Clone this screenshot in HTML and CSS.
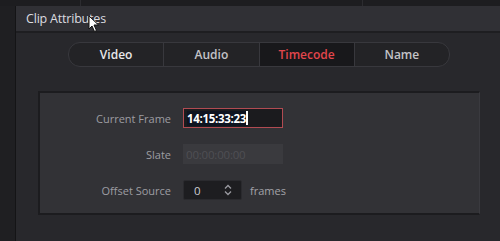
FILE: index.html
```html
<!DOCTYPE html>
<html>
<head>
<meta charset="utf-8">
<link rel="stylesheet" href="styles.css">
</head>
<body>
<div class="app">
  <div class="topstrip"><span class="tick t1"></span><span class="tick t2"></span></div>
  <div class="main">
    <div class="leftstrip"></div>
    <div class="window">
      <div class="header"><span class="title">Clip Attributes</span>
        <svg class="cursor" width="12" height="18" viewBox="0 0 12 18"><path d="M1 1 L1 14 L4 11 L6.5 16.5 L8.5 15.5 L6 10 L10.5 10 Z" fill="#fff" stroke="#111" stroke-width="1"/></svg>
      </div>
      <div class="body">
        <div class="tabs">
          <div class="tab">Video</div>
          <div class="tab">Audio</div>
          <div class="tab active">Timecode</div>
          <div class="tab">Name</div>
        </div>
        <div class="panel">
          <div class="row">
            <div class="label">Current Frame</div>
            <div class="field focus"><span class="sel">14:15:33:23</span><span class="caret"></span></div>
          </div>
          <div class="row">
            <div class="label">Slate</div>
            <div class="field disabled">00:00:00:00</div>
          </div>
          <div class="row">
            <div class="label">Offset Source</div>
            <div class="spin"><span class="num">0</span>
              <svg class="chev" width="8" height="12" viewBox="0 0 8 12"><path d="M1 4.5 L4 1.5 L7 4.5 M1 7.5 L4 10.5 L7 7.5" fill="none" stroke="#9a9aa0" stroke-width="1.3"/></svg>
            </div>
            <div class="unit">frames</div>
          </div>
        </div>
      </div>
    </div>
  </div>
</div>
</body>
</html>
```
FILE: styles.css
```css
html, body {
  margin: 0;
  padding: 0;
  background: #252529;
}
.app {
  width: 500px;
  height: 241px;
  overflow: hidden;
  display: flex;
  flex-direction: column;
  font-family: "Open Sans", "Liberation Sans", sans-serif;
}
.topstrip {
  height: 6px;
  background: #1d1d20;
  position: relative;
  flex: none;
}
.tick {
  position: absolute;
  top: 0;
  width: 1px;
  height: 6px;
  background: #2c2c30;
}
.t1 { left: 80px; }
.t2 { left: 362px; }
.main {
  flex: 1;
  display: flex;
}
.leftstrip {
  width: 15px;
  background: #1f1f22;
  border-right: 1px solid #141416;
  flex: none;
}
.window {
  flex: 1;
  display: flex;
  flex-direction: column;
  background: #28282c;
}
.header {
  height: 25px;
  background: #303035;
  border-bottom: 2px solid #1e1e21;
  display: flex;
  align-items: center;
  padding-left: 10px;
  position: relative;
}
.title {
  color: #dcdce0;
  font-size: 12.5px;
  letter-spacing: -0.2px;
}
.cursor {
  position: absolute;
  left: 72px;
  top: 9px;
}
.body {
  display: flex;
  flex-direction: column;
  padding: 9px 0 0 22px;
}
.tabs {
  margin-left: 30px;
  width: 380px;
  height: 23px;
  display: flex;
  border: 1px solid #38383d;
  border-radius: 12px;
  background: #232326;
  overflow: hidden;
}
.tab {
  flex: 1;
  display: flex;
  align-items: center;
  justify-content: center;
  color: #c4c4c8;
  font-size: 12px;
  font-weight: 600;
  border-left: 1px solid #38383d;
}
.tab:first-child { border-left: none; color: #e8e8ea; }
.tab.active {
  background: #18181b;
  color: #e2464c;
}
.panel {
  margin-top: 24px;
  width: 442px;
  height: 124px;
  background: #323236;
  border-top: 2px solid #1c1c1f;
  border-left: 2px solid #1c1c1f;
  border-right: 1px solid #3a3a3f;
  border-bottom: 2px solid #1c1c1f;
  box-sizing: border-box;
  padding-top: 15px;
  display: flex;
  flex-direction: column;
  gap: 16px;
}
.row {
  display: flex;
  align-items: center;
  height: 20px;
}
.label {
  width: 131px;
  text-align: right;
  color: #9d9da2;
  font-size: 11px;
  padding-right: 12px;
}
.field {
  width: 100px;
  height: 20px;
  box-sizing: border-box;
  display: flex;
  align-items: center;
  padding-left: 3px;
  font-size: 11.5px;
}
.field.focus {
  background: #1b1b1e;
  border: 1px solid #b14b52;
}
.sel {
  background: #0f1420;
  color: #fff;
  font-weight: 700;
  letter-spacing: -0.3px;
}
.caret {
  width: 2px;
  height: 14px;
  background: #fff;
}
.field.disabled {
  background: #3a3a3e;
  color: #4f4f54;
  letter-spacing: -0.2px;
}
.spin {
  width: 59px;
  height: 20px;
  box-sizing: border-box;
  background: #1d1d20;
  border: 1px solid #2a2a2e;
  border-radius: 2px;
  display: flex;
  align-items: center;
  justify-content: space-between;
  padding: 0 9px 0 10px;
  color: #cfcfd3;
  font-size: 11.5px;
}
.unit {
  margin-left: 8px;
  color: #a3a3a8;
  font-size: 11px;
}
```
